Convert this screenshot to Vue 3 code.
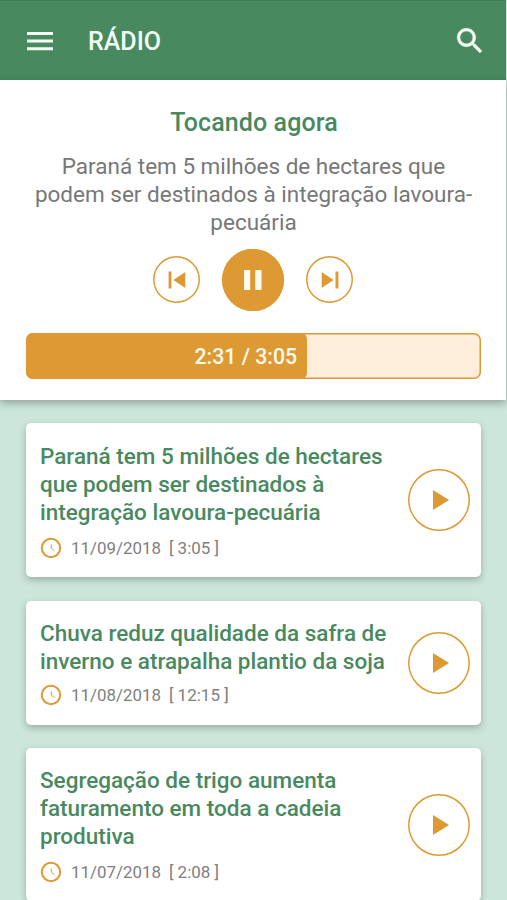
<script setup>
const nowPlaying = {
  lines: ['Paraná tem 5 milhões de hectares que', 'podem ser destinados à integração lavoura-', 'pecuária'],
  elapsed: '2:31',
  total: '3:05',
  progress: 61.8
}

const tracks = [
  {
    lines: ['Paraná tem 5 milhões de hectares', 'que podem ser destinados à', 'integração lavoura-pecuária'],
    date: '11/09/2018',
    duration: '3:05'
  },
  {
    lines: ['Chuva reduz qualidade da safra de', 'inverno e atrapalha plantio da soja'],
    date: '11/08/2018',
    duration: '12:15'
  },
  {
    lines: ['Segregação de trigo aumenta', 'faturamento em toda a cadeia', 'produtiva'],
    date: '11/07/2018',
    duration: '2:08'
  }
]
</script>

<template>
  <div class="screen">
    <header class="bar">
      <button class="icon-btn" aria-label="Menu">
        <svg width="28" height="20" viewBox="0 0 28 20"><path d="M1 2.500h26M1 10.100h26M1 17.700h26" stroke="#f4fff4" stroke-width="3" /></svg>
      </button>
      <h1 class="title">RÁDIO</h1>
      <button class="icon-btn" aria-label="Buscar">
        <svg width="34" height="34" viewBox="0 0 24 24" fill="#f4fff4" stroke="#f4fff4" stroke-width=".3"><path d="M15.500 14h-.79l-.28-.27C15.410 12.590 16 11.110 16 9.500 16 5.910 13.090 3 9.500 3S3 5.910 3 9.500 5.910 16 9.500 16c1.610 0 3.090-.59 4.230-1.570l.27.28v.79l5 4.990L20.490 19l-4.990-5zm-6 0C7.010 14 5 11.990 5 9.500S7.010 5 9.500 5 14 7.010 14 9.500 11.990 14 9.500 14z" /></svg>
      </button>
    </header>

    <section class="player">
      <h2 class="heading">Tocando agora</h2>
      <p class="current"><span v-for="l in nowPlaying.lines" :key="l" class="line">{{ l }}</span></p>
      <div class="controls">
        <button class="round" aria-label="Anterior">
          <svg width="18" height="18" viewBox="0 0 18 18" fill="#dd9a33"><path d="M.6.4h2.900v17.200H.6zM17.300 1v16L5.400 9z" /></svg>
        </button>
        <button class="round main" aria-label="Pausar">
          <svg width="18" height="20" viewBox="0 0 18 20" fill="#fffaf0"><path d="M0 0h6.200v20H0zM11.300 0h6.200v20h-6.200z" /></svg>
        </button>
        <button class="round" aria-label="Próxima">
          <svg width="18" height="18" viewBox="0 0 18 18" fill="#dd9a33"><path d="M14.500.4h2.900v17.200h-2.900zM.7 1v16L12.600 9z" /></svg>
        </button>
      </div>
      <div class="progress">
        <div class="fill" :style="{ width: nowPlaying.progress + '%' }">{{ nowPlaying.elapsed }} / {{ nowPlaying.total }}</div>
      </div>
    </section>

    <main class="list">
      <article v-for="t in tracks" :key="t.date" class="card" :class="{ short: t.lines.length === 2 }">
        <div class="info">
          <h3 class="name"><span v-for="l in t.lines" :key="l" class="line">{{ l }}</span></h3>
          <div class="meta">
            <svg class="clock" width="22" height="22" viewBox="0 0 22 22" fill="none" stroke="#dd9a33"><circle cx="11" cy="11" r="9.200" stroke-width="2" /><path d="M11.300 7.500v3.700l3.200 2.500" stroke-width="1" /></svg>
            <span class="date">{{ t.date }}</span>
            <span class="duration">[ {{ t.duration }} ]</span>
          </div>
        </div>
        <button class="round play" aria-label="Tocar">
          <svg width="16" height="20" viewBox="0 0 16 20" fill="#dd9a33"><path d="M0 0l16 10L0 20z" /></svg>
        </button>
      </article>
    </main>
  </div>
</template>

<style>
body { margin: 0; background: #cce6db; }
</style>

<style scoped>
.screen {
  width: 507px;
  height: 900px;
  overflow: hidden;
  display: flex;
  flex-direction: column;
  box-sizing: border-box;
  background: #cce6db;
  font-family: Roboto, sans-serif;
}
h1, h2, h3, p { margin: 0; font-weight: 500; }
button { padding: 0; border: 0; background: none; display: flex; align-items: center; justify-content: center; }
svg { display: block; flex: none; }
.line { display: block; white-space: nowrap; }
.bar {
  height: 80px;
  flex: none;
  box-sizing: border-box;
  display: flex;
  align-items: center;
  padding: 0 19px 0 26px;
  margin-right: 1px;
  background: #49895f;
  border-top: 1px solid #407d55;
}
.title { flex: 1; margin-left: 34px; padding-top: 2px; color: #f4fff4; font-size: 25px; line-height: 30px; }
.player {
  position: relative;
  height: 320px;
  flex: none;
  box-sizing: border-box;
  padding: 28px 26px 0;
  margin-right: 1px;
  background: #fff;
  box-shadow: 0 3px 8px rgba(0, 0, 0, .3);
  text-align: center;
}
.heading { padding-left: 2px; color: #49895f; font-size: 25px; line-height: 30px; letter-spacing: .1px; }
.current { margin: 14px -1px 0 0; color: #777; font-weight: 400; font-size: 22.500px; line-height: 28.200px; }
.controls { display: flex; justify-content: center; align-items: center; gap: 22px; height: 62px; margin-top: 11.900px; }
.round { width: 47px; height: 47px; box-shadow: inset 0 0 0 1.500px #dd9a33; border-radius: 50%; flex: none; }
.main { width: 62px; height: 62px; background: #dd9a33; }
.progress {
  height: 46px;
  margin: 22.500px -1px 0 0;
  box-shadow: inset 0 0 0 1.500px #dd9a33;
  border-radius: 7px;
  background: #fdeddb;
  overflow: hidden;
}
.fill {
  height: 100%;
  box-sizing: border-box;
  padding-right: 10px;
  border-radius: 0 6px 6px 0;
  background: #dd9a33;
  color: #fffaf0;
  font-size: 21.300px;
  font-weight: 500;
  line-height: 47px;
  text-align: right;
}
.list { display: flex; flex-direction: column; gap: 23.500px; padding: 23px 26px 0; }
.card {
  height: 154px;
  flex: none;
  box-sizing: border-box;
  display: flex;
  align-items: center;
  justify-content: space-between;
  padding: 0 11px 0 14px;
  background: #fff;
  border-radius: 5px;
  box-shadow: 0 3px 7px rgba(0, 0, 0, .25);
}
.card:last-child { height: 153px; }
.short { height: 124px; }
.info { align-self: flex-start; padding-top: 19px; }
.name { color: #49895f; font-size: 22.500px; line-height: 28.200px; }
.meta { display: flex; align-items: center; height: 22px; margin-top: 10px; color: #808080; font-size: 17px; line-height: 22px; white-space: nowrap; }
.short .info, .card:last-child .info { padding-top: 18px; }
.short .meta { margin-top: 9px; }
.date { margin-left: 9px; font-size: 16.900px; }
.duration { margin-left: 8px; }
.play { width: 62px; height: 62px; }
.play svg { margin-left: 4px; }
</style>
